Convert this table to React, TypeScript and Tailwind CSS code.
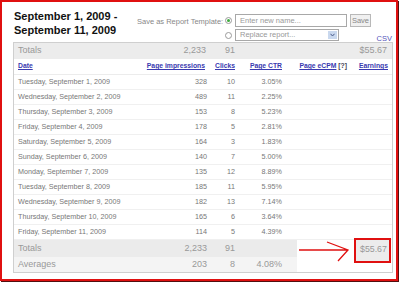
import React from "react";

const ROWS: [string, string, string, string][] = [
  ["Tuesday, September 1, 2009", "328", "10", "3.05%"],
  ["Wednesday, September 2, 2009", "489", "11", "2.25%"],
  ["Thursday, September 3, 2009", "153", "8", "5.23%"],
  ["Friday, September 4, 2009", "178", "5", "2.81%"],
  ["Saturday, September 5, 2009", "164", "3", "1.83%"],
  ["Sunday, September 6, 2009", "140", "7", "5.00%"],
  ["Monday, September 7, 2009", "135", "12", "8.89%"],
  ["Tuesday, September 8, 2009", "185", "11", "5.95%"],
  ["Wednesday, September 9, 2009", "182", "13", "7.14%"],
  ["Thursday, September 10, 2009", "165", "6", "3.64%"],
  ["Friday, September 11, 2009", "114", "5", "4.39%"],
];

function Radio({ checked }: { checked?: boolean }) {
  return (
    <span className="w-[7px] h-[7px] mr-[3px] rounded-full border border-[#9a9a9a] bg-white flex items-center justify-center shrink-0">
      {checked && <span className="w-[3px] h-[3px] rounded-full bg-[#3caa3c]" />}
    </span>
  );
}

export default function App() {
  return (
    <div className="w-[400px] h-[283px] bg-white font-['Liberation_Sans',Arial,sans-serif]">
      <div className="w-[398px] h-[281px] border-2 border-[#e01010] shadow-[1px_1px_0_#501010] flex flex-col">
        {/* Header */}
        <div className="flex h-[40px]">
          <div className="w-[135px] pl-[12px] pt-[7px] text-[11px] leading-[14px] font-bold text-[#111]">
            September 1, 2009 -<br />
            September 11, 2009
          </div>
          <div className="flex pt-[12px]">
            <div className="w-[88px] text-[7.5px] text-[#888] pt-[3px] leading-[10px]">
              Save as Report Template:
            </div>
            <div className="flex flex-col gap-[2px]">
              <div className="flex items-center h-[13px]">
                <Radio checked />
                <div className="w-[112px] h-[13px] border border-[#a8a8a8] bg-white text-[7.5px] text-[#999] pl-[4px] leading-[11px]">
                  Enter new name...
                </div>
                <div className="ml-[3px] w-[21px] h-[13px] border border-[#b8b8b8] bg-[#f0f0f0] text-[7.5px] text-[#888] text-center leading-[11px]">
                  Save
                </div>
              </div>
              <div className="flex items-center h-[12px]">
                <Radio />
                <div className="w-[104px] h-[12px] border border-[#a8a8a8] bg-white flex items-center">
                  <span className="flex-1 text-[7.5px] text-[#999] pl-[4px] leading-[10px]">Replace report...</span>
                  <span className="w-[9px] h-[8px] mr-[1px] bg-[#c9d8ee] flex items-center justify-center">
                    <svg width="5" height="4" viewBox="0 0 5 4">
                      <path d="M0.5 0.8 L2.5 3 L4.5 0.8" fill="none" stroke="#4a5a8a" strokeWidth="1" />
                    </svg>
                  </span>
                </div>
              </div>
            </div>
          </div>
          <div className="ml-auto self-end mr-[4px] mb-[-1px] text-[7.5px] leading-[9px] text-[#5555bb] underline">
            CSV
          </div>
        </div>

        {/* Table */}
        <div className="ml-[11px] w-[380px] border border-[#cfcfcf] text-[#777]">
          <div className="flex items-center h-[16px] bg-[#ececec] text-[9px] text-[#999]">
            <div className="w-[126px] pl-[4px]">Totals</div>
            <div className="w-[67px] text-right pr-[1px]">2,233</div>
            <div className="w-[28px] text-right">91</div>
            <div className="w-[47px]" />
            <div className="w-[65px]" />
            <div className="w-[41px] text-right pr-[1px]">$55.67</div>
          </div>
          <div className="flex items-center h-[16px] border-b border-[#ececec] text-[6.8px] font-bold text-[#3a3ab0]">
            <div className="w-[126px] pl-[4px] underline">Date</div>
            <div className="w-[67px] text-right underline pr-[2px]">Page impressions</div>
            <div className="w-[28px] text-right underline">Clicks</div>
            <div className="w-[47px] text-right underline">Page CTR</div>
            <div className="w-[65px] text-right">
              <span className="underline">Page eCPM</span> <span className="text-[#445]">[?]</span>
            </div>
            <div className="w-[41px] text-right underline">Earnings</div>
          </div>
          {ROWS.map((r) => (
            <div key={r[0]} className="flex items-center h-[15px] border-b border-[#f0f0f0] text-[7.2px] text-[#777]">
              <div className="w-[126px] pl-[4px]">{r[0]}</div>
              <div className="w-[67px] text-right">{r[1]}</div>
              <div className="w-[28px] text-right">{r[2]}</div>
              <div className="w-[47px] text-right">{r[3]}</div>
            </div>
          ))}
          <div className="flex h-[17px] text-[9px] text-[#999]">
            <div className="w-[283px] flex items-center bg-[#ebebeb]">
              <div className="w-[126px] pl-[4px]">Totals</div>
              <div className="w-[67px] text-right">2,233</div>
              <div className="w-[28px] text-right">91</div>
            </div>
            <svg className="relative mt-[-2px] shrink-0" width="57" height="25" viewBox="0 0 57 25">
              <path d="M2 12 L51 12 M30 4 L51 12 L41 23" fill="none" stroke="#e01010" strokeWidth="1.3" />
            </svg>
            <div className="relative mt-[-2px] w-[37px] h-[25px] border-2 border-[#e01010] bg-[#ececec] flex items-center pl-[4px] pb-[3px] shrink-0 text-[8.8px] leading-[10px]">
              $55.67
            </div>
          </div>
          <div className="flex h-[15px] text-[9px] text-[#999]">
            <div className="w-[283px] flex items-center bg-[#f4f4f4]">
              <div className="w-[126px] pl-[4px]">Averages</div>
              <div className="w-[67px] text-right">203</div>
              <div className="w-[28px] text-right">8</div>
              <div className="w-[47px] text-right">4.08%</div>
            </div>
          </div>
        </div>
      </div>
    </div>
  );
}
